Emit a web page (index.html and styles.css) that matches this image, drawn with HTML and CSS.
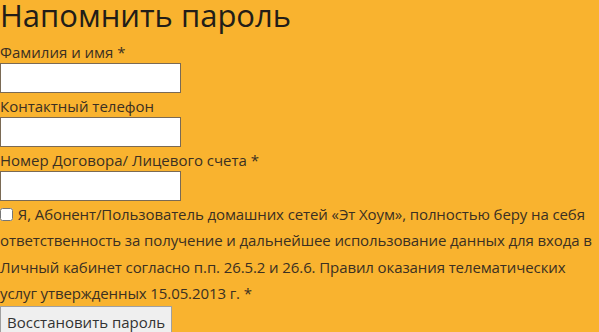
FILE: index.html
```html
<!DOCTYPE html>
<html lang="ru">
<head>
    <meta charset="UTF-8">
    <meta name="viewport" content="width=device-width, initial-scale=1.0">
    <title>Напомнить пароль</title>
    <link rel="stylesheet" href="styles.css">
</head>
<body>

    <h1>Напомнить пароль</h1>

    <form class="remind-form">
        <div class="field">
            <label for="fio">Фамилия и имя *</label>
            <input type="text" id="fio">
        </div>
        <div class="field">
            <label for="phone">Контактный телефон</label>
            <input type="text" id="phone">
        </div>
        <div class="field">
            <label for="contract">Номер Договора/ Лицевого счета *</label>
            <input type="text" id="contract">
        </div>
        <p class="agree">
            <input type="checkbox" id="agree">
            Я, Абонент/Пользователь домашних сетей «Эт Хоум», полностью беру на себя ответственность за получение и дальнейшее использование данных для входа в Личный кабинет согласно п.п. 26.5.2 и 26.6. Правил оказания телематических услуг утвержденных 15.05.2013 г. *
        </p>
        <button type="button">Восстановить пароль</button>
    </form>

</body>
</html>
```

FILE: styles.css
```css
body {
    margin: 0;
    background-color: #f9b32f;
    color: #3b3022;
    font-family: "Open Sans", "Noto Sans", sans-serif;
    font-size: 15px;
}
h1 {
    margin: 0 0 12px;
    font-size: 31px;
    font-weight: normal;
    line-height: 30px;
    color: #221d18;
}
.field {
    display: flex;
    flex-direction: column;
    align-items: flex-start;
}
.field + .field {
    margin-top: 3px;
}
.field label {
    line-height: 21px;
}
.field input {
    width: 181px;
    height: 30px;
    box-sizing: border-box;
    border: 1px solid #7a6a55;
    background: #fff;
    margin: 0;
}
.agree {
    margin: 0;
    line-height: 1.75;
    letter-spacing: -0.1px;
}
.agree input {
    margin: 0 1px 0 0;
    width: 13px;
    height: 13px;
    vertical-align: -1px;
}
.remind-form button {
    display: block;
    font-family: inherit;
    font-size: 15px;
    line-height: 20px;
    padding: 5px 6px;
    background: #efefef;
    border: 1px solid #a0a0a0;
    color: #333;
}
```
